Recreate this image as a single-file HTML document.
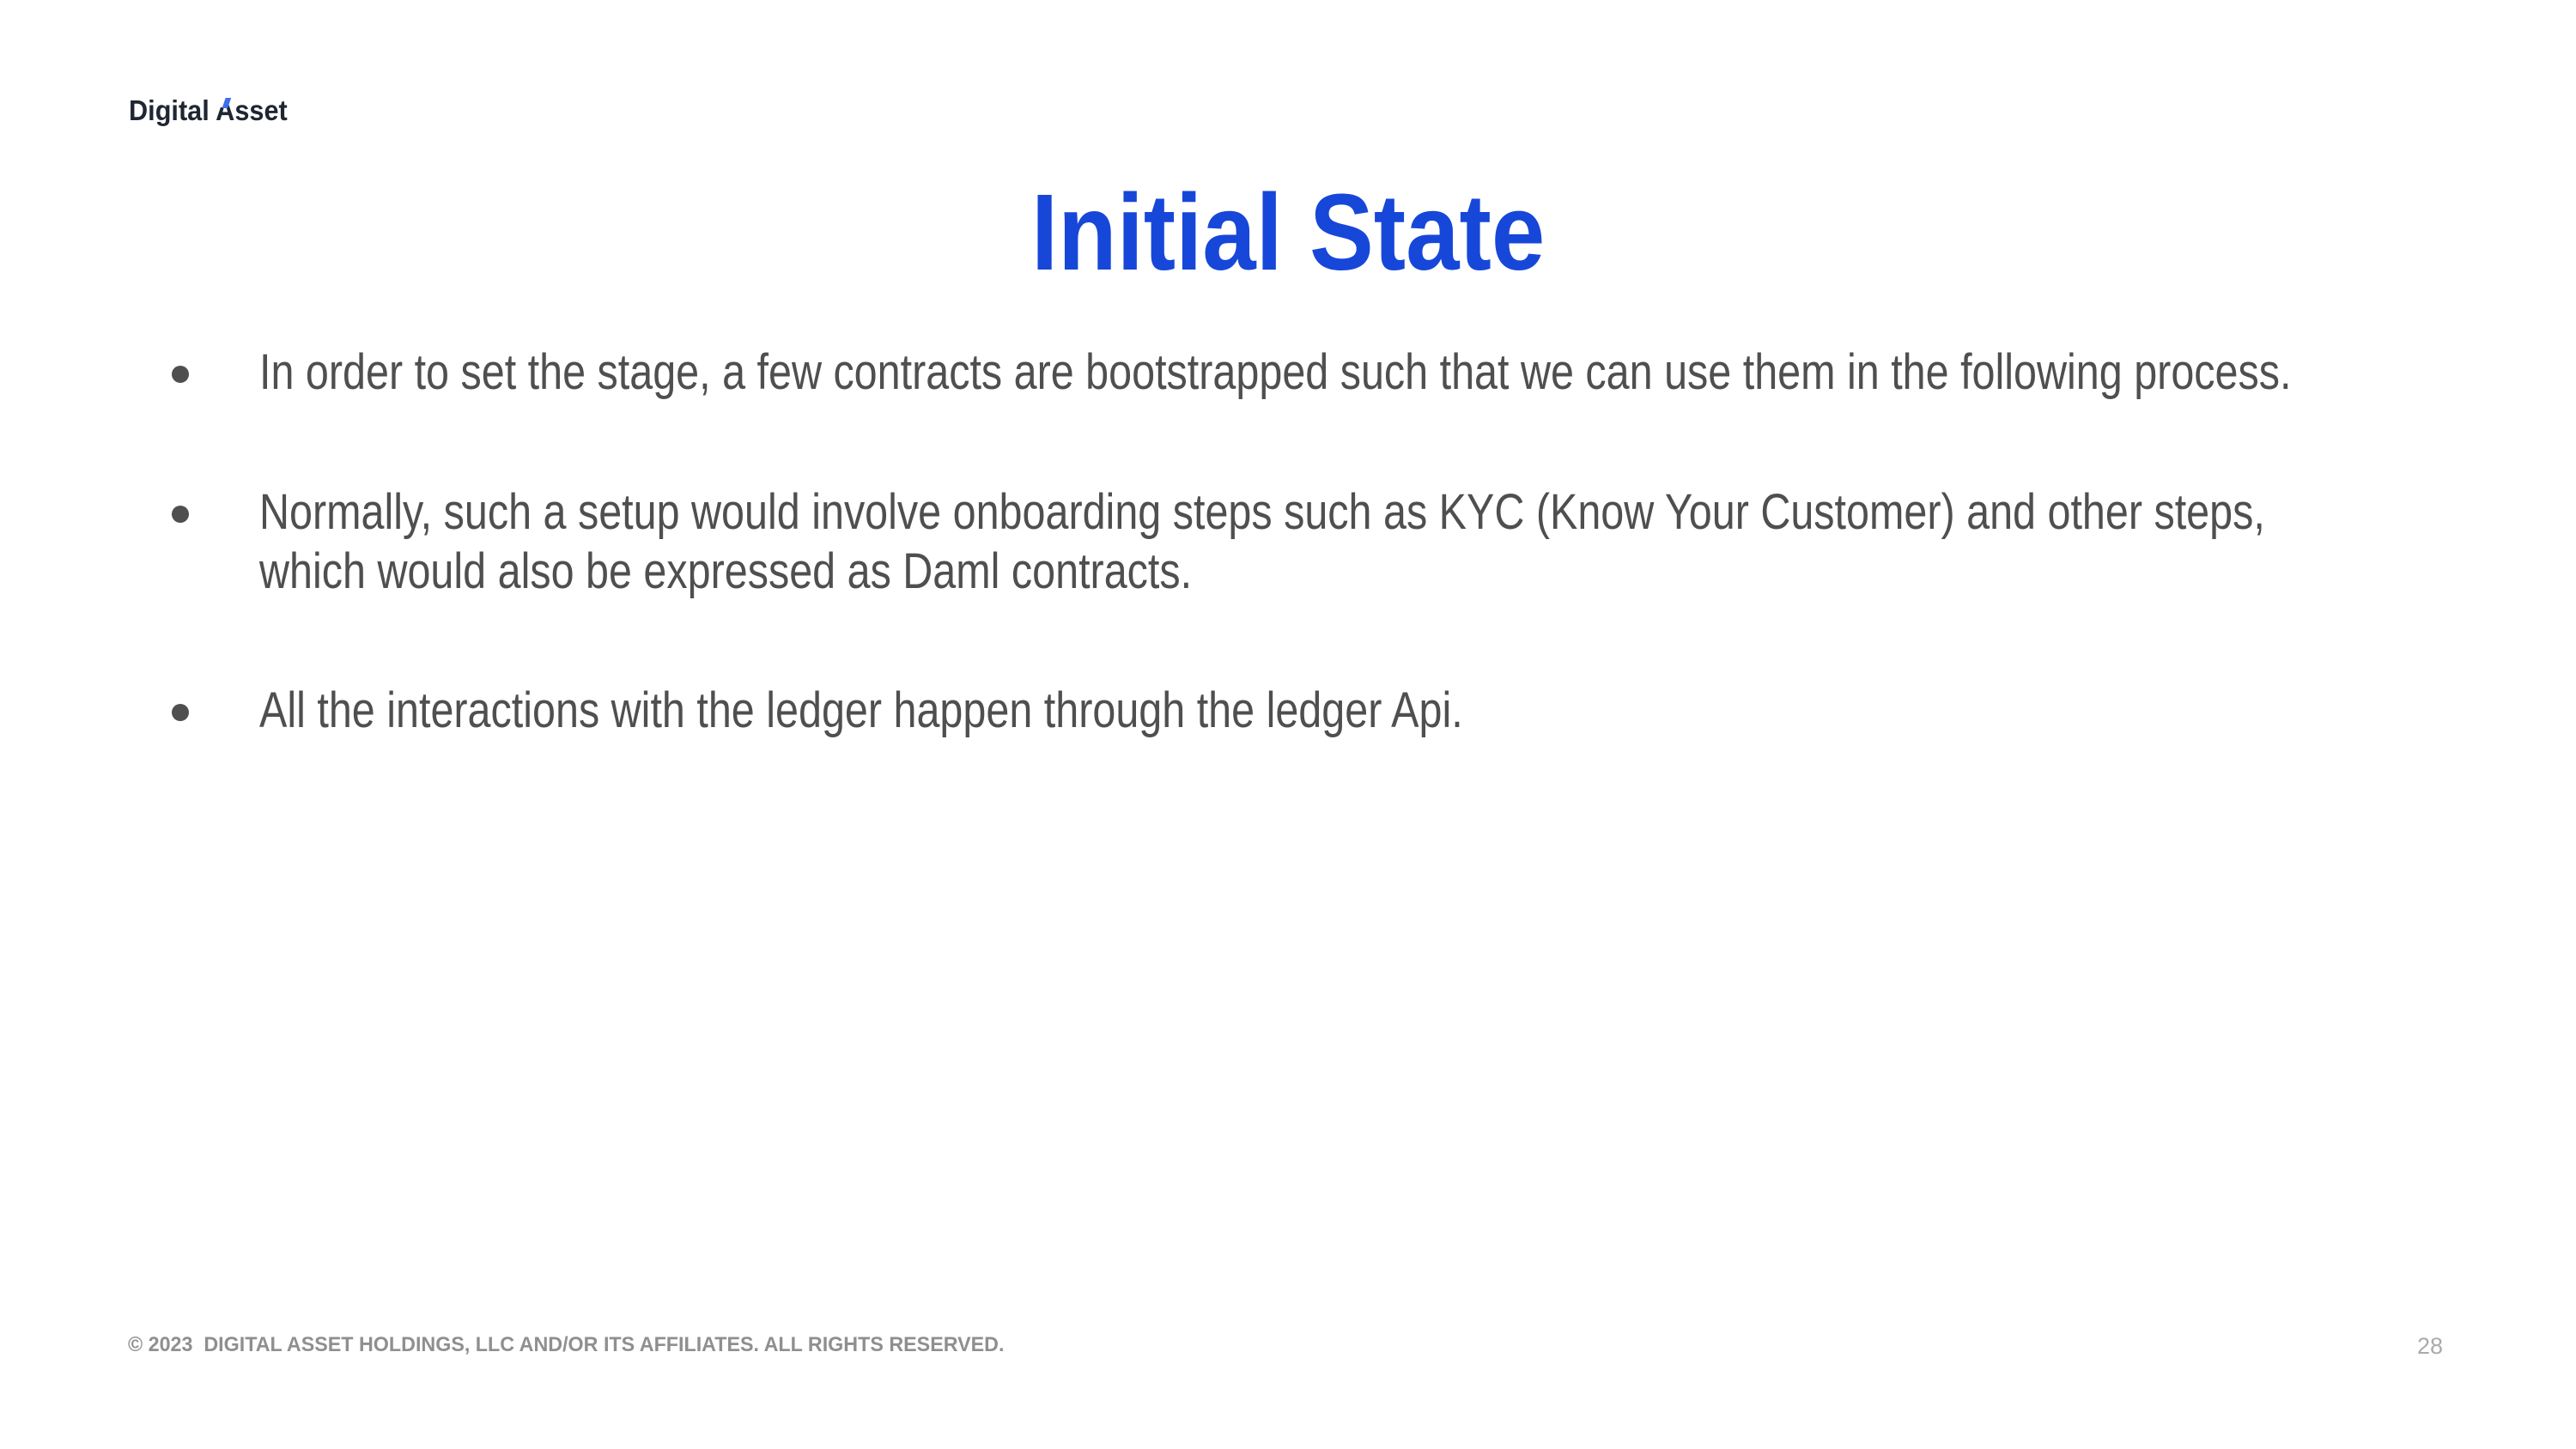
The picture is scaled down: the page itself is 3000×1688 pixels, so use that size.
<!DOCTYPE html>
<html><head><meta charset="utf-8"><style>
html,body{margin:0;padding:0;background:#fff;}
body{width:3000px;height:1688px;position:relative;overflow:hidden;font-family:"Liberation Sans",sans-serif;}
.a{position:absolute;white-space:nowrap;transform-origin:left top;}
.logo{left:150px;top:110px;font-weight:bold;font-size:33px;color:#1e2633;transform:scaleX(0.93);}
.title{left:1201px;top:198px;font-weight:bold;font-size:126px;color:#1747d9;transform:scaleX(0.89);}
.t{font-size:58px;color:#4f4f4f;transform:scaleX(0.836);}
.dot{position:absolute;width:20px;height:20px;border-radius:50%;background:#4f4f4f;}
.foot{left:149px;top:1553px;font-weight:bold;font-size:24px;color:#8f8f8f;transform:scaleX(0.97);}
.pg{left:2815px;top:1553px;font-size:27px;color:#aaa;}
</style></head><body>
<div class="a logo">Digital <span style="position:relative">A<span style="position:absolute;left:0;top:0;width:60%;height:40%;background:#fff"></span><span style="position:absolute;left:42%;top:4px;width:7px;height:12px;background:#3b6ff0;transform:skewX(-20deg)"></span></span>sset</div>
<div class="a title">Initial State</div>
<div class="dot" style="left:200px;top:426px"></div>
<div class="a t" style="left:302px;top:400px">In order to set the stage, a few contracts are bootstrapped such that we can use them in the following process.</div>
<div class="dot" style="left:200px;top:589px"></div>
<div class="a t" style="left:302px;top:563px">Normally, such a setup would involve onboarding steps such as KYC (Know Your Customer) and other steps,</div>
<div class="a t" style="left:302px;top:632px">which would also be expressed as Daml contracts.</div>
<div class="dot" style="left:200px;top:820px"></div>
<div class="a t" style="left:302px;top:794px">All the interactions with the ledger happen through the ledger Api.</div>
<div class="a foot">© 2023&nbsp; DIGITAL ASSET HOLDINGS, LLC AND/OR ITS AFFILIATES. ALL RIGHTS RESERVED.</div>
<div class="a pg">28</div>
</body></html>
